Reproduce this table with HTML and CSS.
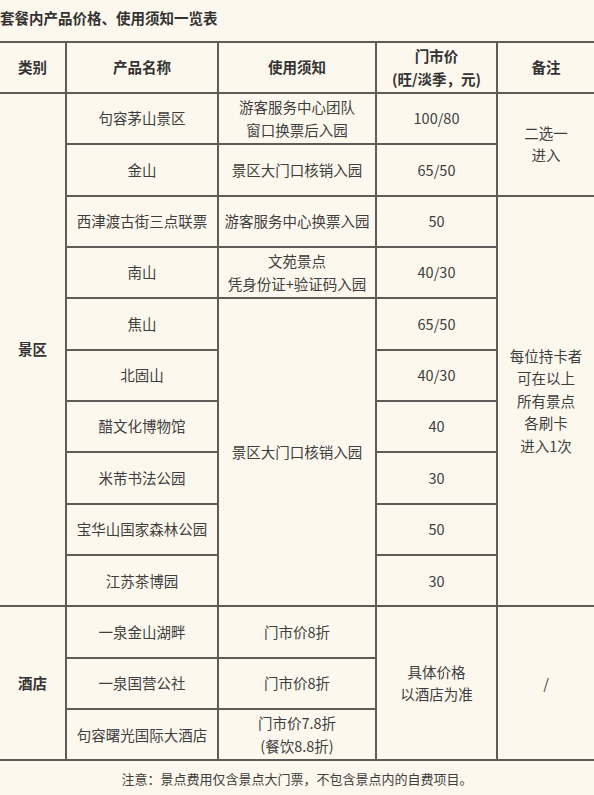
FILE: index.html
```html
<!DOCTYPE html>
<html lang="zh-CN">
<head>
<meta charset="utf-8">
<title>套餐内产品价格、使用须知一览表</title>
<link rel="stylesheet" href="styles.css">
</head>
<body>
<div class="page">
  <div class="title">套餐内产品价格、使用须知一览表</div>
  <table class="grid">
    <colgroup>
      <col class="c1"><col class="c2"><col class="c3"><col class="c4"><col class="c5">
    </colgroup>
    <thead>
      <tr class="head">
        <th class="first">类别</th>
        <th>产品名称</th>
        <th>使用须知</th>
        <th>门市价<br>(旺/淡季，元)</th>
        <th class="last">备注</th>
      </tr>
    </thead>
    <tbody>
      <tr>
        <td class="first cat" rowspan="10">景区</td>
        <td>句容茅山景区</td>
        <td>游客服务中心团队<br>窗口换票后入园</td>
        <td>100/80</td>
        <td class="last" rowspan="2">二选一<br>进入</td>
      </tr>
      <tr>
        <td>金山</td>
        <td>景区大门口核销入园</td>
        <td>65/50</td>
      </tr>
      <tr>
        <td>西津渡古街三点联票</td>
        <td>游客服务中心换票入园</td>
        <td>50</td>
        <td class="last" rowspan="8">每位持卡者<br>可在以上<br>所有景点<br>各刷卡<br>进入1次</td>
      </tr>
      <tr>
        <td>南山</td>
        <td>文苑景点<br>凭身份证+验证码入园</td>
        <td>40/30</td>
      </tr>
      <tr>
        <td>焦山</td>
        <td rowspan="6">景区大门口核销入园</td>
        <td>65/50</td>
      </tr>
      <tr>
        <td>北固山</td>
        <td>40/30</td>
      </tr>
      <tr>
        <td>醋文化博物馆</td>
        <td>40</td>
      </tr>
      <tr>
        <td>米芾书法公园</td>
        <td>30</td>
      </tr>
      <tr>
        <td>宝华山国家森林公园</td>
        <td>50</td>
      </tr>
      <tr>
        <td>江苏茶博园</td>
        <td>30</td>
      </tr>
      <tr>
        <td class="first cat" rowspan="3">酒店</td>
        <td>一泉金山湖畔</td>
        <td>门市价8折</td>
        <td rowspan="3">具体价格<br>以酒店为准</td>
        <td class="last" rowspan="3">/</td>
      </tr>
      <tr>
        <td>一泉国营公社</td>
        <td>门市价8折</td>
      </tr>
      <tr>
        <td>句容曙光国际大酒店</td>
        <td>门市价7.8折<br>(餐饮8.8折)</td>
      </tr>
    </tbody>
  </table>
  <div class="note">注意：景点费用仅含景点大门票，不包含景点内的自费项目。</div>
</div>
</body>
</html>
```
FILE: styles.css
```css
html, body {
  margin: 0;
  padding: 0;
  background: #fdf8ed;
}

.page {
  width: 594px;
  height: 795px;
  overflow: hidden;
  font-family: "Noto Sans CJK SC", "Noto Sans", sans-serif;
  color: #3e3e3e;
}

.title {
  height: 41px;
  line-height: 36px;
  font-size: 14.5px;
  font-weight: bold;
  color: #333;
  white-space: nowrap;
}

.grid {
  width: 594px;
  border-collapse: collapse;
  table-layout: fixed;
  font-size: 14.5px;
}

.c1 { width: 66px; }
.c2 { width: 152px; }
.c3 { width: 158px; }
.c4 { width: 121px; }
.c5 { width: 97px; }

.grid th,
.grid td {
  border: 2px solid #5d5c57;
  padding: 0 2px;
  text-align: center;
  vertical-align: middle;
  line-height: 22.5px;
  white-space: nowrap;
}

.grid th {
  font-weight: bold;
  color: #333;
}

.grid .first { border-left: none; }
.grid .last { border-right: none; }

.grid tr { height: 51.35px; }
.grid tr.head { height: 51px; }

.grid td.cat {
  font-weight: bold;
  color: #333;
}

.note {
  text-align: center;
  font-size: 13px;
  line-height: 20px;
  padding-top: 8px;
  color: #3e3e3e;
}
```
